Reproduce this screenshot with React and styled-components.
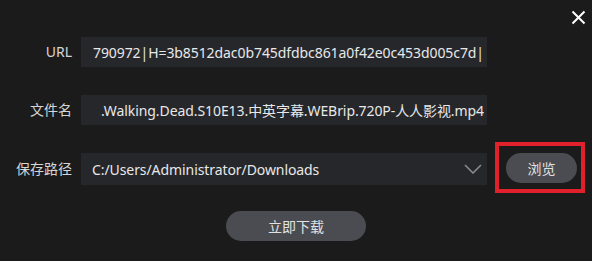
import React from 'react';
import styled, { createGlobalStyle } from 'styled-components';

const GlobalStyle = createGlobalStyle`
  html, body {
    margin: 0;
    padding: 0;
    background: #1b1b1c;
  }
  * {
    box-sizing: border-box;
  }
`;

const Dialog = styled.div`
  position: relative;
  width: 592px;
  height: 261px;
  background: #1b1b1c;
  font-family: 'Noto Sans', 'Noto Sans CJK SC', sans-serif;
  padding-top: 37px;
  overflow: hidden;
`;

const CloseButton = styled.button`
  position: absolute;
  top: 10px;
  right: 6px;
  width: 15px;
  height: 15px;
  padding: 0;
  border: 0;
  background: none;
  cursor: pointer;
  display: flex;
`;

const Form = styled.div`
  display: grid;
  grid-template-columns: 72px 406px auto;
  column-gap: 9px;
  row-gap: 28px;
  align-items: center;
`;

const Label = styled.div`
  text-align: right;
  color: #d6d6d6;
  font-size: 14px;
  line-height: 30px;
  white-space: nowrap;
`;

const Field = styled.div`
  height: ${(p) => p.$height || 30}px;
  background: #26272b;
  color: #e8e8e8;
  font-size: 14px;
  letter-spacing: -0.08px;
  display: flex;
  align-items: center;
  padding: 0 3px 0 11px;
  overflow: hidden;
  white-space: nowrap;
`;

/* text scrolled to its end, as an input shows it after typing */
const ScrolledText = styled.div`
  flex: 1;
  min-width: 0;
  display: flex;
  justify-content: flex-end;
  overflow: hidden;
`;

const Chevron = styled.svg`
  margin-left: auto;
  margin-right: 2px;
  flex: none;
`;

const Highlight = styled.div`
  margin: -11px 0 -8px -1px;
  width: 90px;
  height: 51px;
  border: 4px solid #e0202a;
  padding: 7px 4px 0 7px;
`;

const PillButton = styled.button`
  width: ${(p) => p.$width}px;
  height: 30px;
  border: 0;
  border-radius: 15px;
  background: #4a4c52;
  color: #e2e2e2;
  font-family: 'Noto Sans CJK SC', sans-serif;
  font-size: 14px;
  cursor: pointer;
  padding: 0;
`;

const Footer = styled.div`
  display: flex;
  padding: 26px 0 0 226px;
`;

export default function App() {
  return (
    <>
      <GlobalStyle />
      <Dialog>
        <CloseButton aria-label="关闭">
          <svg width="15" height="15" viewBox="0 0 15 15">
            <path d="M1.5 1.5 L13.5 13.5 M13.5 1.5 L1.5 13.5" stroke="#fff" strokeWidth="2" />
          </svg>
        </CloseButton>
        <Form>
          <Label>URL</Label>
          <Field>
            <ScrolledText>
              <span>790972|H=3b8512dac0b745dfdbc861a0f42e0c453d005c7d|</span>
            </ScrolledText>
          </Field>
          <span />

          <Label>文件名</Label>
          <Field>
            <ScrolledText>
              <span>.Walking.Dead.S10E13.中英字幕.WEBrip.720P-人人影视.mp4</span>
            </ScrolledText>
          </Field>
          <span />

          <Label>保存路径</Label>
          <Field $height={32}>
            C:/Users/Administrator/Downloads
            <Chevron width="18" height="10" viewBox="0 0 18 10">
              <path d="M1 1 L9 9 L17 1" fill="none" stroke="#8a8a8e" strokeWidth="1.6" />
            </Chevron>
          </Field>
          <Highlight>
            <PillButton $width={71}>浏览</PillButton>
          </Highlight>
        </Form>
        <Footer>
          <PillButton $width={140}>立即下载</PillButton>
        </Footer>
      </Dialog>
    </>
  );
}
